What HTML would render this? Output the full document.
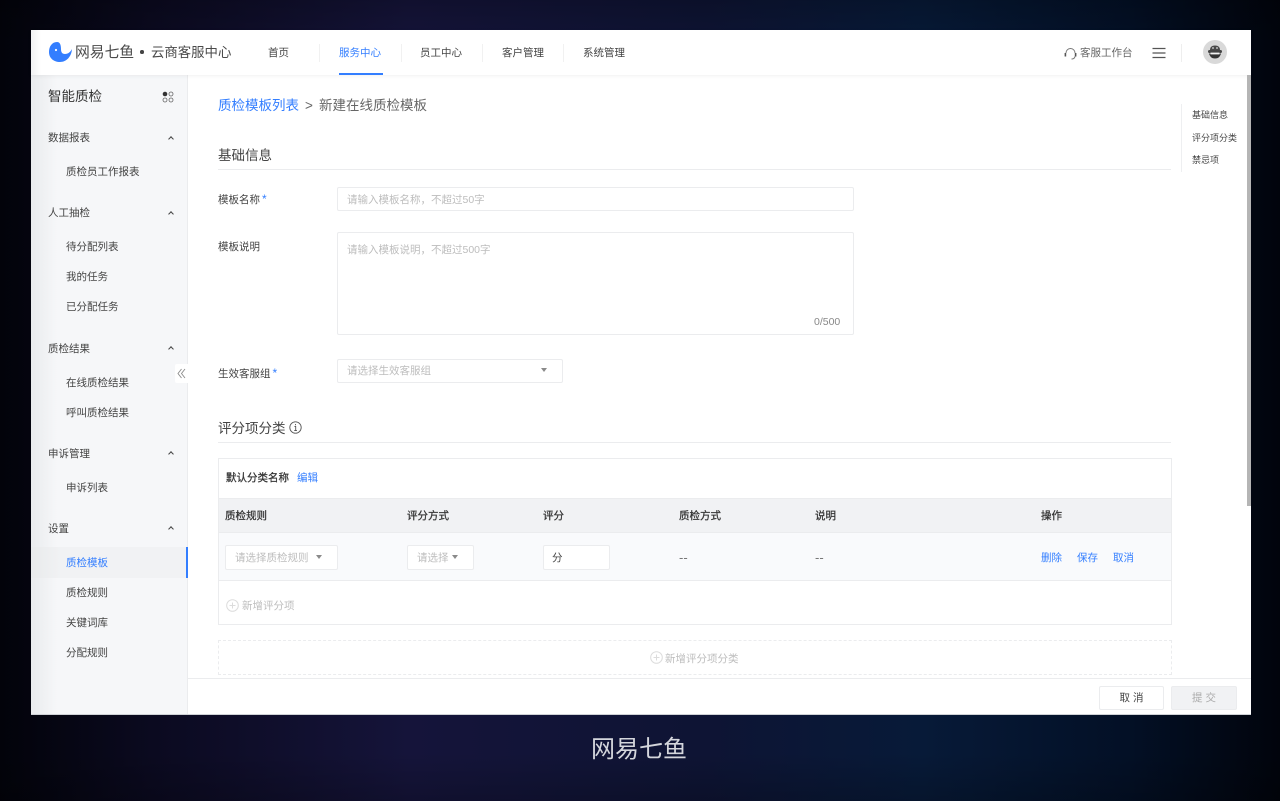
<!DOCTYPE html>
<html lang="zh"><head><meta charset="utf-8"><title>网易七鱼</title>
<style>
*{box-sizing:border-box;margin:0;padding:0}
html,body{width:1280px;height:801px;overflow:hidden;background:#05071a}
body{position:relative;font-family:"Liberation Sans","Noto Sans CJK SC",sans-serif;color:#444;filter:blur(.25px);
background:linear-gradient(90deg,#02030a 0%,#0b0a20 12%,#15143a 32%,#0e1434 55%,#071a38 72%,#031026 88%,#01040c 100%)}
.sh{position:absolute;left:0;top:0;width:1280px;height:801px;background:linear-gradient(180deg,rgba(0,0,0,.2) 0,rgba(0,0,0,0) 6%,rgba(0,0,0,0) 94%,rgba(0,0,0,.2) 100%)}
.a{position:absolute;white-space:nowrap}
.t{position:absolute;white-space:nowrap;font-size:10.500px;line-height:16px;color:#444}
.b{color:#337eff}
.g{color:#bdbdbd}
.m{color:#333;-webkit-text-stroke:.25px #333}
.box{position:absolute;background:#fff;border:1px solid #ebecee;border-radius:2px}
.line{position:absolute;background:#ebecee}
.tri{position:absolute;width:0;height:0;border-left:3.500px solid transparent;border-right:3.500px solid transparent;border-top:4px solid #8a8a8a}
.chev{position:absolute;width:4px;height:4px;border-left:1.500px solid #444;border-top:1.500px solid #444;transform:rotate(45deg)}
.sep{position:absolute;width:1px;height:18px;top:44px;background:#f1f1f1}
.star{font-size:12px;margin-left:2px}
</style></head><body>
<div class="sh"></div>
<div class="a" style="left:31px;top:30px;width:1220px;height:685px;background:#fff;overflow:hidden;border-bottom:1px solid #cfd2d6">
</div>

<!-- sidebar -->
<div class="a" style="left:31px;top:75px;width:157px;height:639px;background:linear-gradient(90deg,#e9ebed 0,#f6f7f9 26px,#f6f7f9 100%);border-right:1px solid #ebecee"></div>
<div class="a" style="left:31px;top:547px;width:156px;height:31px;background:linear-gradient(90deg,#e8eaeb 0,#f1f2f4 30px)"></div>
<div class="a" style="left:186px;top:547px;width:2px;height:31px;background:#337eff"></div>

<!-- header -->
<div class="a" style="left:31px;top:30px;width:1220px;height:45px;background:linear-gradient(90deg,#f0f1f2 0,#fff 10px);box-shadow:0 1px 4px rgba(0,0,0,.06)"></div>
<svg class="a" style="left:48px;top:41px" width="26" height="23" viewBox="0 0 26 23"><path fill="#337eff" d="M9 1C4 1 1 5.500 1 11c0 6 4.500 10 11 10 6.500 0 11.500-5.500 12-13-1.500 3-4 5-7 5-3 0-4-2-4-5 0-4-1-7-4-7z"/><circle cx="8" cy="9" r="1.100" fill="#fff"/></svg>
<div class="t" style="left:75px;top:42px;font-size:14.800px;line-height:22px;color:#4a4a4a">网易七鱼</div>
<div class="a" style="left:140px;top:50px;width:3.500px;height:3.500px;border-radius:50%;background:#444"></div>
<div class="t" style="left:151px;top:43px;font-size:13.400px;line-height:20px;color:#4a4a4a">云商客服中心</div>
<div class="t" style="left:268px;top:45px">首页</div>
<div class="sep" style="left:319px"></div>
<div class="t b" style="left:339px;top:45px">服务中心</div>
<div class="a" style="left:339px;top:73px;width:44px;height:2px;background:#337eff"></div>
<div class="sep" style="left:401px"></div>
<div class="t" style="left:420px;top:45px">员工中心</div>
<div class="sep" style="left:482px"></div>
<div class="t" style="left:502px;top:45px">客户管理</div>
<div class="sep" style="left:563px"></div>
<div class="t" style="left:583px;top:45px">系统管理</div>
<svg class="a" style="left:1064px;top:47px" width="13" height="14" viewBox="0 0 13 14" fill="none" stroke="#777" stroke-width="1"><path d="M2 6a4.500 4.500 0 0 1 9 0"/><path d="M11 9.500c-.3 1.500-1.500 2.500-3.500 2.500"/><rect x=".6" y="6" width="1.600" height="3.500" fill="#555" stroke="none"/><rect x="10.800" y="6" width="1.600" height="3.500" fill="#555" stroke="none"/></svg>
<div class="t" style="left:1080px;top:45px;color:#666">客服工作台</div>
<svg class="a" style="left:1152px;top:47px" width="14" height="12"><path d="M.5 1.500h13M.5 6h13M.5 10.500h13" stroke="#555" stroke-width="1.200"/></svg>
<div class="a" style="left:1181px;top:44px;width:1px;height:18px;background:#eee"></div>
<svg class="a" style="left:1203px;top:40px" width="24" height="24" viewBox="0 0 24 24"><circle cx="12" cy="12" r="12" fill="#d9d9d9"/><path d="M7 10c0-3 2-4.500 5-4.500s5 1.500 5 4.500z" fill="#4a4a4a"/><rect x="5" y="10" width="14" height="3" rx="1.500" fill="#444"/><path d="M6 13.500c1 3.500 3 5 6 5s5-1.500 6-5z" fill="#333"/><path d="M7.500 13.500h9" stroke="#f2f2f2" stroke-width="1.800"/><circle cx="10" cy="8" r=".9" fill="#ddd"/><circle cx="14" cy="8" r=".9" fill="#ddd"/></svg>

<!-- sidebar text -->
<div class="t" style="left:48px;top:87px;font-size:13.500px;line-height:19px;color:#333">智能质检</div>
<svg class="a" style="left:162px;top:91px" width="12" height="12" fill="none"><circle cx="3" cy="3" r="2.300" fill="#333"/><circle cx="9" cy="3" r="2" stroke="#666" stroke-width=".8"/><circle cx="3" cy="9" r="2" stroke="#666" stroke-width=".8"/><circle cx="9" cy="9" r="2" stroke="#666" stroke-width=".8"/></svg>
<div class="t" style="left:48px;top:130px">数据报表</div><div class="chev" style="left:168.500px;top:137px"></div>
<div class="t" style="left:66px;top:164px">质检员工作报表</div>
<div class="t" style="left:48px;top:205px">人工抽检</div><div class="chev" style="left:168.500px;top:212px"></div>
<div class="t" style="left:66px;top:239px">待分配列表</div>
<div class="t" style="left:66px;top:269px">我的任务</div>
<div class="t" style="left:66px;top:299px">已分配任务</div>
<div class="t" style="left:48px;top:341px">质检结果</div><div class="chev" style="left:168.500px;top:347px"></div>
<div class="t" style="left:66px;top:375px">在线质检结果</div>
<div class="t" style="left:66px;top:405px">呼叫质检结果</div>
<div class="t" style="left:48px;top:446px">申诉管理</div><div class="chev" style="left:168.500px;top:452px"></div>
<div class="t" style="left:66px;top:480px">申诉列表</div>
<div class="t" style="left:48px;top:521px">设置</div><div class="chev" style="left:168.500px;top:527px"></div>
<div class="t b" style="left:66px;top:555px">质检模板</div>
<div class="t" style="left:66px;top:585px">质检规则</div>
<div class="t" style="left:66px;top:615px">关键词库</div>
<div class="t" style="left:66px;top:645px">分配规则</div>
<div class="a" style="left:175px;top:364px;width:13px;height:19px;background:#fff;border-radius:2px 0 0 2px"></div>
<svg class="a" style="left:177px;top:368px" width="9" height="11" fill="none" stroke="#8a8a8a" stroke-width=".9"><path d="M4.500 1 1 5.500 4.500 10M8 1 4.500 5.500 8 10"/></svg>

<!-- breadcrumb -->
<div class="t b" style="left:218px;top:96px;font-size:13.500px;line-height:20px">质检模板列表</div>
<div class="t" style="left:305px;top:96px;font-size:13.500px;line-height:20px;color:#666">&gt;</div>
<div class="t" style="left:319px;top:96px;font-size:13.500px;line-height:20px;color:#666">新建在线质检模板</div>

<!-- anchors -->
<div class="a" style="left:1181px;top:104px;width:1px;height:68px;background:#eeeff1"></div>
<div class="t" style="left:1192px;top:108px;font-size:9px;line-height:15px">基础信息</div>
<div class="t" style="left:1192px;top:131px;font-size:9px;line-height:15px">评分项分类</div>
<div class="t" style="left:1192px;top:153px;font-size:9px;line-height:15px">禁忌项</div>
<div class="a" style="left:1247px;top:75px;width:4px;height:431px;background:#b5b5b5"></div>

<!-- basic info -->
<div class="t" style="left:218px;top:146px;font-size:13.500px;line-height:19px">基础信息</div>
<div class="line" style="left:218px;top:169px;width:953px;height:1px"></div>
<div class="t" style="left:218px;top:191px">模板名称<span class="b star">*</span></div>
<div class="box" style="left:337px;top:187px;width:517px;height:24px"></div>
<div class="t g" style="left:347px;top:192px">请输入模板名称，不超过50字</div>
<div class="t" style="left:218px;top:239px">模板说明</div>
<div class="box" style="left:337px;top:232px;width:517px;height:103px"></div>
<div class="t g" style="left:347px;top:242px">请输入模板说明，不超过500字</div>
<div class="t" style="left:814px;top:314px;color:#888">0/500</div>
<div class="t" style="left:218px;top:365px">生效客服组<span class="b star">*</span></div>
<div class="box" style="left:337px;top:359px;width:226px;height:24px"></div>
<div class="t g" style="left:347px;top:363px">请选择生效客服组</div>
<div class="tri" style="left:541px;top:368px"></div>

<!-- score section -->
<div class="t" style="left:218px;top:419px;font-size:13.500px;line-height:19px">评分项分类</div>
<svg class="a" style="left:289px;top:421px" width="13" height="13" fill="none" stroke="#555"><circle cx="6.500" cy="6.500" r="5.700" stroke-width=".9"/><path d="M5.500 5.500h1.200v4M5.300 9.500h2.600M6.500 3v1.200" stroke-width=".9"/></svg>
<div class="line" style="left:218px;top:442px;width:953px;height:1px"></div>
<div class="box" style="left:218px;top:458px;width:954px;height:167px;border-color:#ebecee;border-radius:0"></div>
<div class="t m" style="left:226px;top:470px">默认分类名称</div>
<div class="t b" style="left:297px;top:470px">编辑</div>
<div class="a" style="left:219px;top:498px;width:952px;height:35px;background:#f1f2f4;border-top:1px solid #ebecee;border-bottom:1px solid #ebecee"></div>
<div class="t m" style="left:225px;top:508px">质检规则</div>
<div class="t m" style="left:407px;top:508px">评分方式</div>
<div class="t m" style="left:543px;top:508px">评分</div>
<div class="t m" style="left:679px;top:508px">质检方式</div>
<div class="t m" style="left:815px;top:508px">说明</div>
<div class="t m" style="left:1041px;top:508px">操作</div>
<div class="a" style="left:219px;top:533px;width:952px;height:48px;background:#f9fafc;border-bottom:1px solid #ebecee"></div>
<div class="box" style="left:225px;top:545px;width:113px;height:25px"></div>
<div class="t g" style="left:235px;top:550px">请选择质检规则</div>
<div class="tri" style="left:316px;top:555px"></div>
<div class="box" style="left:407px;top:545px;width:67px;height:25px"></div>
<div class="t g" style="left:417px;top:550px">请选择</div>
<div class="tri" style="left:452px;top:555px"></div>
<div class="box" style="left:543px;top:545px;width:67px;height:25px"></div>
<div class="t" style="left:552px;top:550px">分</div>
<div class="t" style="left:679px;top:550px;color:#777;font-size:13px">--</div>
<div class="t" style="left:815px;top:550px;color:#777;font-size:13px">--</div>
<div class="t b" style="left:1041px;top:550px">删除</div>
<div class="t b" style="left:1077px;top:550px">保存</div>
<div class="t b" style="left:1113px;top:550px">取消</div>
<svg class="a" style="left:226px;top:599px" width="13" height="13" fill="none" stroke="#dcdcdc"><circle cx="6.500" cy="6.500" r="5.800"/><path d="M3.500 6.500h6M6.500 3.500v6"/></svg>
<div class="t g" style="left:242px;top:598px">新增评分项</div>
<div class="a" style="left:218px;top:640px;width:954px;height:35px;border:1px dashed #ebecee"></div>
<svg class="a" style="left:650px;top:651px" width="13" height="13" fill="none" stroke="#dcdcdc"><circle cx="6.500" cy="6.500" r="5.800"/><path d="M3.500 6.500h6M6.500 3.500v6"/></svg>
<div class="t g" style="left:665px;top:651px">新增评分项分类</div>

<!-- footer -->
<div class="a" style="left:188px;top:678px;width:1063px;height:36px;background:#fff;border-top:1px solid #ebecee"></div>
<div class="box" style="left:1099px;top:686px;width:65px;height:24px;text-align:center;line-height:22px;font-size:10.500px;color:#444;letter-spacing:3px;padding-left:3px">取消</div>
<div class="box" style="left:1171px;top:686px;width:66px;height:24px;text-align:center;line-height:22px;font-size:10.500px;color:#aaa;background:#f1f2f4;letter-spacing:3px;padding-left:3px">提交</div>

<div class="t" style="left:591px;top:735px;font-size:24px;line-height:30px;color:#d4d6dc">网易七鱼</div>
</body></html>
